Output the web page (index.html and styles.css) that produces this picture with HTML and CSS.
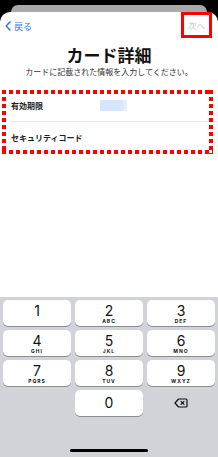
FILE: index.html
```html
<!DOCTYPE html>
<html lang="ja">
<head>
<meta charset="utf-8">
<link rel="stylesheet" href="styles.css">
</head>
<body>
<div class="peek"></div>
<div class="sheet">
  <div class="nav">
    <div class="back">
      <svg class="chev" width="6" height="10" viewBox="0 0 6 10"><path d="M5 1 L1.2 5 L5 9" fill="none" stroke="#2f7cf6" stroke-width="1.6" stroke-linecap="round" stroke-linejoin="round"/></svg>
      <span>戻る</span>
    </div>
    <div class="next">次へ</div>
  </div>
  <h1 class="title">カード詳細</h1>
  <p class="sub">カードに記載された情報を入力してください。</p>
  <div class="list">
    <div class="row first">
      <span class="label">有効期限</span>
      <span class="ph"></span>
    </div>
    <div class="row">
      <span class="label">セキュリティコード</span>
    </div>
    <div class="mark"></div>
  </div>
</div>
<div class="kb">
  <div class="keys">
    <div class="key"><span class="d">1</span><span class="l"></span></div>
    <div class="key"><span class="d">2</span><span class="l">ABC</span></div>
    <div class="key"><span class="d">3</span><span class="l">DEF</span></div>
    <div class="key"><span class="d">4</span><span class="l">GHI</span></div>
    <div class="key"><span class="d">5</span><span class="l">JKL</span></div>
    <div class="key"><span class="d">6</span><span class="l">MNO</span></div>
    <div class="key"><span class="d">7</span><span class="l">PQRS</span></div>
    <div class="key"><span class="d">8</span><span class="l">TUV</span></div>
    <div class="key"><span class="d">9</span><span class="l">WXYZ</span></div>
    <div class="key blank"></div>
    <div class="key zero"><span class="d">0</span></div>
    <div class="key blank del">
      <svg width="14" height="10" viewBox="0 0 14 10"><path d="M4.6 1 H12 a1 1 0 0 1 1 1 V8 a1 1 0 0 1 -1 1 H4.6 L1 5 Z" fill="none" stroke="#111" stroke-width="1.2" stroke-linejoin="round"/><path d="M7 3.4 L10 6.4 M10 3.4 L7 6.4" stroke="#111" stroke-width="1.1" stroke-linecap="round"/></svg>
    </div>
  </div>
  <div class="home"></div>
</div>
</body>
</html>
```
FILE: styles.css
```css
html, body {
  margin: 0;
  padding: 0;
}
body {
  width: 218px;
  height: 457px;
  overflow: hidden;
  background: #000;
  display: flex;
  flex-direction: column;
  font-family: "Noto Sans CJK JP", "Noto Sans", sans-serif;
}
.peek {
  height: 7px;
  margin: 5px 11px 0;
  background: #a9a9ac;
  border-radius: 9px 9px 0 0;
  flex: none;
}
.sheet {
  flex: 1;
  background: #fff;
  border-radius: 10px 10px 0 0;
  display: flex;
  flex-direction: column;
}
.nav {
  height: 28px;
  display: flex;
  justify-content: space-between;
  align-items: center;
  padding: 0 6px 0 5px;
}
.back {
  display: flex;
  align-items: center;
  gap: 3px;
  color: #2f7cf6;
  font-size: 9px;
}
.chev {
  display: block;
}
.next {
  align-self: flex-start;
  box-sizing: border-box;
  width: 31px;
  height: 26px;
  border: 3px solid #ff0000;
  color: #c4c4c8;
  font-size: 8.5px;
  display: flex;
  align-items: center;
  justify-content: center;
}
.title {
  margin: 5px 0 0;
  text-align: center;
  font-size: 17px;
  line-height: 20px;
  font-weight: 700;
  color: #111;
}
.sub {
  margin: 2px 0 0;
  text-align: center;
  font-size: 8px;
  line-height: 10px;
  color: #333;
}
.list {
  position: relative;
  margin-top: 13px;
  border-bottom: 1px solid #f1f1f3;
}
.row {
  height: 31px;
  margin-left: 11px;
  display: flex;
  align-items: center;
  font-size: 8px;
  font-weight: 700;
  color: #222;
}
.row.first {
  border-bottom: 1px solid #ececef;
}
.label {
  width: 89px;
}
.ph {
  width: 27px;
  height: 11px;
  background: linear-gradient(90deg, #d5e5fb 0, #d5e5fb 70%, #e8f0fc 100%);
}
.mark {
  position: absolute;
  left: 2px;
  right: 5px;
  top: 0;
  bottom: -1px;
  background:
    repeating-linear-gradient(90deg, #ff0000 0 4px, transparent 4px 7px) top left / 100% 4px no-repeat,
    repeating-linear-gradient(90deg, #ff0000 0 4px, transparent 4px 7px) bottom left / 100% 4px no-repeat,
    repeating-linear-gradient(180deg, #ff0000 0 4px, transparent 4px 7px) top left / 4px 100% no-repeat,
    repeating-linear-gradient(180deg, #ff0000 0 4px, transparent 4px 7px) top right / 4px 100% no-repeat;
}
.kb {
  height: 160px;
  flex: none;
  background: #d1d3d9;
  padding: 3px 3px 0;
  box-sizing: border-box;
}
.keys {
  display: grid;
  grid-template-columns: repeat(3, 68px);
  grid-auto-rows: 26px;
  gap: 4px;
}
.key {
  background: #fff;
  border-radius: 5px;
  box-shadow: 0 1px 0 #8b8c90;
  display: flex;
  flex-direction: column;
  align-items: center;
  justify-content: center;
  font-family: "Inter", "Noto Sans", sans-serif;
  color: #111;
}
.d {
  font-size: 14px;
  line-height: 15px;
  font-weight: 400;
}
.l {
  font-size: 5px;
  line-height: 6px;
  height: 6px;
  font-weight: 700;
  letter-spacing: 1px;
}
.zero .d {
  line-height: 16px;
}
.blank {
  background: transparent;
  box-shadow: none;
}
.del svg {
  display: block;
}
.home {
  width: 78px;
  height: 3px;
  margin: 33px auto 0;
  background: #000;
  border-radius: 2px;
}
```
